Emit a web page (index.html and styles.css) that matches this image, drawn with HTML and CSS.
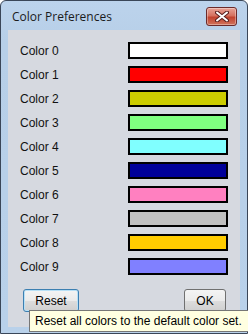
FILE: index.html
```html
<!DOCTYPE html>
<html lang="en">
<head>
  <meta charset="UTF-8">
  <title>Color Preferences</title>
  <link rel="stylesheet" href="styles.css">
</head>
<body>
  <div class="window">
    <div class="titlebar">
      <span class="title">Color Preferences</span>
      <div class="close-btn">
        <svg width="14" height="11" viewBox="0 0 14 11">
          <path d="M2 1.5 L12 9.5 M12 1.5 L2 9.5" stroke="#5a2020" stroke-width="4" stroke-linecap="round"/>
          <path d="M2 1.5 L12 9.5 M12 1.5 L2 9.5" stroke="#ffffff" stroke-width="2" stroke-linecap="round"/>
        </svg>
      </div>
    </div>

    <div class="client">
      <div class="color-list">
        <span class="label">Color 0</span><span class="swatch" style="background:#ffffff"></span>
        <span class="label">Color 1</span><span class="swatch" style="background:#ff0000"></span>
        <span class="label">Color 2</span><span class="swatch" style="background:#cccc00"></span>
        <span class="label">Color 3</span><span class="swatch" style="background:#80ff80"></span>
        <span class="label">Color 4</span><span class="swatch" style="background:#80ffff"></span>
        <span class="label">Color 5</span><span class="swatch" style="background:#000099"></span>
        <span class="label">Color 6</span><span class="swatch" style="background:#ff80c0"></span>
        <span class="label">Color 7</span><span class="swatch" style="background:#c0c0c0"></span>
        <span class="label">Color 8</span><span class="swatch" style="background:#ffcc00"></span>
        <span class="label">Color 9</span><span class="swatch" style="background:#8080ff"></span>
      </div>

      <div class="buttons">
        <button class="btn btn-reset">Reset</button>
        <button class="btn btn-ok">OK</button>
      </div>
    </div>
  </div>

  <!-- tooltip sits above the window frame -->
  <div class="tooltip">Reset all colors to the default color set.</div>
</body>
</html>
```

FILE: styles.css
```css
body {
  margin: 0;
  padding: 0;
  background: #ffffff;
  font-family: 'Liberation Sans', Arial, sans-serif;
  font-size: 12px;
  color: #000;
  position: relative;
  overflow: hidden;
  height: 334px;
}

.window {
  width: 246px;
  height: 332px;
  border: 1px solid #3a4658;
  border-radius: 6px 6px 0 0;
  background: linear-gradient(180deg, #bcd3ec 0%, #b7cfe8 40px, #b9d1ea 100%);
  overflow: hidden;
}

.titlebar {
  height: 29px;
  display: flex;
  align-items: center;
  justify-content: space-between;
  padding: 0 10px 0 11px;
}

.title {
  font-family: 'Open Sans', 'Noto Sans', sans-serif;
  font-size: 12px;
  color: #1b1b1b;
  margin-top: 1px;
}

.close-btn {
  width: 29px;
  height: 17px;
  margin-top: 2px;
  border: 1px solid #6b2a2a;
  border-radius: 3px;
  background: linear-gradient(180deg, #e8a397 0%, #d5715f 45%, #c2432f 55%, #d0735c 100%);
  box-shadow: inset 0 0 0 1px rgba(255, 255, 255, 0.35);
  display: flex;
  align-items: center;
  justify-content: center;
}

.client {
  margin: 0 7px;
  height: 297px;
  background: #d6d9e0;
  box-sizing: border-box;
  padding: 12px 12px 0 12px;
}

.color-list {
  display: grid;
  grid-template-columns: 108px 100px;
  grid-auto-rows: 17px;
  row-gap: 7px;
  align-items: center;
}

.label {
  font-size: 12px;
  color: #111;
}

.swatch {
  display: block;
  height: 17px;
  box-sizing: border-box;
  border: 2px solid #000;
}

.buttons {
  display: flex;
  justify-content: space-between;
  margin-top: 14px;
  padding: 0 2px 0 3px;
}

.btn {
  font-family: 'Liberation Sans', Arial, sans-serif;
  font-size: 12px;
  color: #000;
  height: 23px;
  border: 1px solid #707070;
  border-radius: 3px;
  background: linear-gradient(180deg, #f4f4f4 0%, #ebebeb 50%, #dddddd 51%, #cfcfcf 100%);
  padding: 0;
}

.btn-reset {
  width: 56px;
  border-color: #3c7fb1;
  box-shadow: inset 0 0 0 1px #b8e0f6;
}

.btn-ok {
  width: 42px;
}

.tooltip {
  position: absolute;
  left: 29px;
  top: 310px;
  width: 230px;
  height: 22px;
  box-sizing: border-box;
  padding: 3px 0 0 5px;
  background: #ffffe1;
  border: 1px solid #767676;
  font-size: 12px;
  color: #000;
  white-space: nowrap;
}
```
